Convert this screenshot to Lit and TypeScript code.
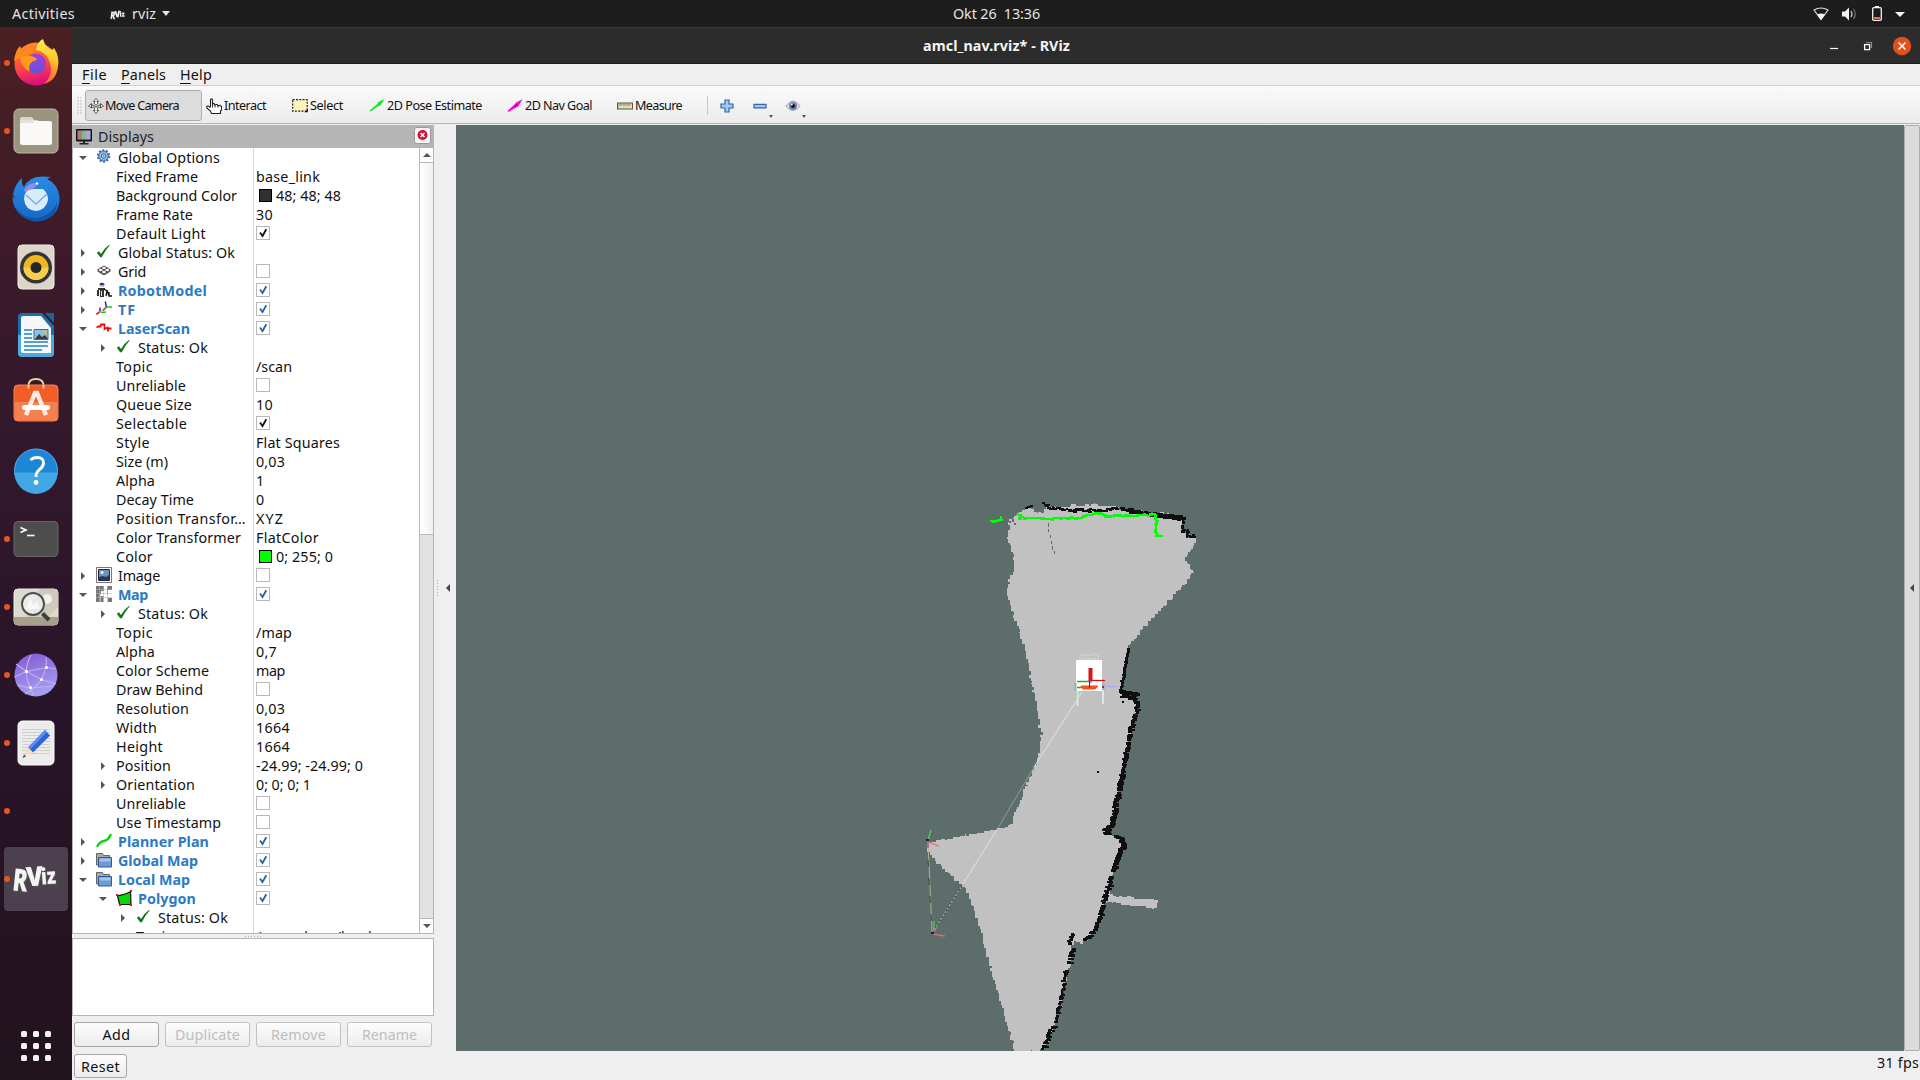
import { LitElement, html, svg, css, nothing } from "lit";
import { customElement } from "lit/decorators.js";

type Pt = [number, number];

/* Deterministic noise so that the occupancy grid always looks the same. */
function noise(seed: number) {
  let s = seed;
  return () => {
    s = (s * 1103515245 + 12345) & 0x7fffffff;
    return s / 0x7fffffff;
  };
}

const CELL = 1.5;
const snap = (v: number) => Math.round(v / CELL) * CELL;

/* Outline of the free space, stepped cell by cell. */
function ragged(points: Pt[], amp: number, seed: number): string {
  const rnd = noise(seed);
  let d = "";
  let lastY = 0;
  points.forEach((a, i) => {
    const b = points[(i + 1) % points.length];
    const len = Math.hypot(b[0] - a[0], b[1] - a[1]);
    const n = Math.max(1, Math.round(len / 2.4));
    for (let k = 0; k < n; k++) {
      const t = k / n;
      const x = snap(a[0] + (b[0] - a[0]) * t + (rnd() - 0.5) * amp);
      const y = Math.min(1051, snap(a[1] + (b[1] - a[1]) * t + (rnd() - 0.5) * amp));
      d += d ? `L${x} ${lastY}L${x} ${y}` : `M${x} ${y}`;
      lastY = y;
    }
  });
  return d + "Z";
}

/* A line of occupied cells. */
function cells(points: Pt[], width: number, jitter: number, seed: number, cell = 2): string {
  const rnd = noise(seed);
  let d = "";
  for (let i = 0; i < points.length - 1; i++) {
    const [ax, ay] = points[i];
    const [bx, by] = points[i + 1];
    const len = Math.hypot(bx - ax, by - ay);
    const n = Math.max(1, Math.round(len / 1.2));
    for (let k = 0; k <= n; k++) {
      const t = k / n;
      const x = Math.round(ax + (bx - ax) * t + (rnd() - 0.5) * jitter);
      const y = Math.round(ay + (by - ay) * t + (rnd() - 0.5) * jitter);
      const w = Math.max(cell, Math.round(width + (rnd() - 0.5) * jitter));
      d += `M${x - w / 2} ${y - 1}h${w}v${cell}h${-w}z`;
    }
  }
  return d;
}

const FREE: Pt[] = [
  [1010, 520], [1015, 514], [1025, 508], [1032, 507], [1034, 512], [1043, 512], [1045, 506], [1060, 507],
  [1077, 505], [1093, 504], [1110, 506], [1120, 509], [1160, 513], [1182, 518], [1183, 532], [1196, 537],
  [1195, 545], [1185, 560], [1193, 574], [1173, 597], [1153, 618], [1128, 647], [1125, 670], [1120, 693],
  [1135, 697], [1136, 707], [1132, 727], [1122, 773], [1113, 820], [1107, 833], [1117, 837], [1122, 843],
  [1113, 872], [1109, 896], [1100, 917], [1090, 938], [1082, 943], [1075, 941], [1072, 948], [1071, 963],
  [1063, 990], [1056, 1020], [1047, 1045], [1040, 1051], [1015, 1051], [1007, 1023], [993, 977], [980, 927],
  [967, 890], [962, 885], [940, 865], [927, 850], [928, 842], [960, 836], [983, 832], [1009, 825],
  [1020, 800], [1028, 780], [1037, 760], [1041, 733], [1036, 700], [1030, 673], [1023, 640], [1013, 613],
  [1007, 593], [1010, 575], [1015, 567], [1013, 552], [1007, 537], [1008, 529],
];
const SPUR: Pt[] = [[1106, 894], [1120, 896], [1133, 898], [1158, 900], [1156, 908], [1133, 905], [1106, 901]];

const WALLS = [
  cells([[1026, 508], [1031, 506]], 3, 1.5, 3),
  cells([[1043, 504], [1048, 507], [1060, 509], [1070, 511], [1083, 510], [1100, 511], [1112, 509], [1125, 509]], 3, 3, 7),
  cells([[1128, 510], [1140, 513], [1155, 514], [1170, 516], [1182, 518]], 5, 3, 9, 3),
  cells([[1182, 518], [1183, 532], [1188, 531], [1187, 536], [1195, 536]], 2, 2.4, 11),
  cells([[1128, 649], [1125, 665], [1121, 690]], 3, 1.4, 13),
  cells([[1120, 691], [1127, 693], [1137, 695]], 5, 3.4, 15, 3),
  cells([[1122, 696], [1134, 698], [1138, 706], [1135, 716], [1130, 735], [1127, 750], [1122, 777]], 4, 2.4, 17, 2),
  cells([[1122, 777], [1118, 795], [1114, 818], [1112, 824]], 5, 3, 19, 2),
  cells([[1112, 824], [1107, 830], [1108, 835]], 6, 4, 21, 2),
  cells([[1116, 836], [1122, 839], [1123, 845], [1118, 858], [1113, 871]], 4.6, 2, 23, 3),
  cells([[1110, 876], [1111, 882], [1106, 893], [1105, 899]], 4.4, 3, 25, 2),
  cells([[1104, 900], [1101, 915], [1095, 930], [1090, 937], [1085, 940]], 4.4, 2.2, 27, 2),
  cells([[1072, 934], [1070, 944]], 4, 2.2, 29),
  cells([[1073, 948], [1070, 965]], 5, 3.4, 31, 2),
  cells([[1066, 970], [1063, 990], [1059, 1008], [1056, 1022]], 3, 2.4, 33, 2),
  cells([[1054, 1026], [1048, 1036], [1046, 1044], [1043, 1048]], 4, 3, 35, 2),
].join("");

const SCAN = [
  cells([[1019, 514], [1020, 518], [1035, 518], [1050, 519], [1065, 518], [1080, 518], [1084, 516], [1100, 513], [1106, 517], [1115, 515], [1130, 516], [1140, 515], [1155, 515]], 3, 1.4, 41),
  cells([[1155, 515], [1156, 522], [1155, 532], [1157, 535], [1162, 536]], 2.4, 1.4, 43),
  cells([[992, 522], [1001, 520]], 3, 1.5, 45),
  "M1000 516h2v5h-2z",
].join("");

const GAPS = [
  "M1048 523h1v4h-1zM1048 529h1v3h-1zM1050 535h1v3h-1zM1051 541h1v3h-1zM1052 546h1v4h-1zM1054 551h1v3h-1z",
  "M1010 516h2v2h-2zM1012 519h2v3h-2zM1009 521h2v2h-2zM1014 523h2v2h-2z",
].join("");

/* ---------- tree ---------- */
interface Row {
  depth: number;
  label: string;
  w: number;
  icon?: string;
  open?: boolean;
  arrow?: boolean;
  bold?: boolean;
  value?: string;
  vw?: number;
  check?: "off" | "on" | "blue";
  swatch?: string;
}
const leaf = (label: string, w: number, value: string, vw: number, extra: Partial<Row> = {}): Row => ({ depth: 1, label, w, value, vw, ...extra });
const flag = (label: string, w: number, check: "off" | "on"): Row => ({ depth: 1, label, w, check });
const node = (label: string, w: number, icon: string, extra: Partial<Row> = {}): Row => ({ depth: 0, label, w, icon, arrow: true, ...extra });

const ROWS: Row[] = [
  node("Global Options", 101, "gear", { open: true }),
  leaf("Fixed Frame", 81, "base_link", 63),
  leaf("Background Color", 120, "48; 48; 48", 64, { swatch: "#303030" }),
  leaf("Frame Rate", 76, "30", 16),
  flag("Default Light", 89, "on"),
  node("Global Status: Ok", 116, "ok"),
  node("Grid", 27, "grid", { check: "off" }),
  node("RobotModel", 88, "robot", { bold: true, check: "blue" }),
  node("TF", 17, "tf", { bold: true, check: "blue" }),
  node("LaserScan", 71, "laser", { bold: true, check: "blue", open: true }),
  node("Status: Ok", 69, "ok", { depth: 1 }),
  leaf("Topic", 36, "/scan", 35),
  flag("Unreliable", 69, "off"),
  leaf("Queue Size", 75, "10", 16),
  flag("Selectable", 70, "on"),
  leaf("Style", 33, "Flat Squares", 83),
  leaf("Size (m)", 51, "0,03", 28),
  leaf("Alpha", 38, "1", 7),
  leaf("Decay Time", 77, "0", 8),
  leaf("Position Transfor…", 129, "XYZ", 27),
  leaf("Color Transformer", 124, "FlatColor", 62),
  leaf("Color", 36, "0; 255; 0", 56, { swatch: "#00ff00" }),
  node("Image", 41, "image", { check: "off" }),
  node("Map", 29, "map", { bold: true, check: "blue", open: true }),
  node("Status: Ok", 69, "ok", { depth: 1 }),
  leaf("Topic", 36, "/map", 35),
  leaf("Alpha", 38, "0,7", 20),
  leaf("Color Scheme", 92, "map", 28),
  flag("Draw Behind", 86, "off"),
  leaf("Resolution", 72, "0,03", 28),
  leaf("Width", 40, "1664", 33),
  leaf("Height", 46, "1664", 33),
  leaf("Position", 54, "-24.99; -24.99; 0", 106, { arrow: true }),
  leaf("Orientation", 78, "0; 0; 0; 1", 54, { arrow: true }),
  flag("Unreliable", 69, "off"),
  flag("Use Timestamp", 104, "off"),
  node("Planner Plan", 90, "path", { bold: true, check: "blue" }),
  node("Global Map", 79, "folder", { bold: true, check: "blue" }),
  node("Local Map", 71, "folder", { bold: true, check: "blue", open: true }),
  node("Polygon", 57, "polygon", { bold: true, check: "blue", open: true, depth: 1 }),
  node("Status: Ok", 69, "ok", { depth: 2 }),
  { depth: 2, label: "Topic", w: 36, value: "/move_base/local_c…", vw: 139 },
];

const ICONS: Record<string, unknown> = {
  gear: svg`<circle cx="7.500" cy="7" r="5.600" fill="none" stroke="#3d6da8" stroke-width="2.200" stroke-dasharray="2 1.500"/><circle cx="7.500" cy="7" r="4.900" fill="#8fb4e2" stroke="#3f70ad" stroke-width="1"/><circle cx="7.500" cy="7" r="2.200" fill="#c7dcf5" stroke="#3f70ad"/><circle cx="7.500" cy="7" r=".8" fill="#3f70ad"/>`,
  ok: svg`<path d="M.8 8.700L3 7.300L5 10Q8.500 4 13 1L13.800 1.200Q9 6.500 5.800 13.300L4.200 13.300Z" fill="#15751a"/>`,
  grid: svg`<path d="M1.500 7L8 3L14.500 7L8 11ZM4.700 5L11.300 9M11.300 5L4.700 9M1.500 8L8 12L14.500 8" fill="none" stroke="#444" stroke-width="1"/>`,
  robot: svg`<path d="M3.500 2Q6 -.5 8.500 2V3H3.500Z" fill="#25346f"/><path d="M4 3h4v2h-4z" fill="#bbb"/><path d="M2 6h7v2H2zM1 8h2v6H1zM4 8h4v7H4z" fill="#333"/><path d="M5 9h1v5H5z" fill="#ddd"/><path d="M8 7l3 2-1 5M11 8l2 6h3M13 10v4" fill="none" stroke="#111" stroke-width="1.300"/>`,
  tf: svg`<path d="M9.300 .5l1 5.500M4 6.500v4" stroke="#1414d8" stroke-width="1.400"/><path d="M10.500 6h5.500M5 11.500l5-.5" stroke="#10c818" stroke-width="1.400"/><path d="M10.500 6L7 9.500M4 10.500L.5 13.500" stroke="#e01010" stroke-width="1.600"/><path d="M4 11l6-5" stroke="#c8a820" stroke-width=".8"/>`,
  laser: svg`<path d="M.5 7.500L2.500 6.500H4.500L5 4.500H8.500V9L11.500 7.500L12 11.500V8.500H15.500" fill="none" stroke="#f80808" stroke-width="1.800"/>`,
  image: svg`<path d="M.5 .5h15v15H.5z" fill="#fff" stroke="#777"/><path d="M2.500 2.500h11v11h-11z" fill="#6c8fc4" stroke="#222840"/><circle cx="6" cy="5.500" r="1.600" fill="#fbf3b8"/><path d="M3 10l4-1 3 1 3-2v5H3z" fill="#2c3a58"/>`,
  map: svg`<path d="M0 0h16v16H0z" fill="#fff"/><path d="M0 0h8v5H5v3.500H4V16H0zM12 0h4v4h-4zM4.500 10h3v6h-3zM12 12h4v4h-4z" fill="#777"/><path d="M8 0h4v8H8z" fill="#fff"/><path d="M11 0h5v4h-4v4h-1z" fill="#777"/><path d="M0 3.500h16M0 7.500h16M0 11.500h16M3.500 0v16M7.500 0v16M11.500 0v16" stroke="#b5b5b5" stroke-width=".6"/>`,
  path: svg`<path d="M1.500 13Q4 8.500 8 8Q12 7.500 14.500 2" fill="none" stroke="#04d808" stroke-width="2.500" stroke-linecap="round"/>`,
  folder: svg`<path d="M.5 13V1.500h6l1 2h6V13z" fill="#a9a9a9" stroke="#666"/><path d="M2.500 5.500h13v9.500h-13z" fill="#6f9bd2" stroke="#2e5a95"/><path d="M3.500 6.500h11v3h-11z" fill="#a3c2e8"/>`,
  polygon: svg`<path d="M1.500 5.500Q9 5 14.500 1.500L15 14.500L3.500 14.500Z" fill="#06d808" stroke="#111" stroke-width="1.200"/><path d="M0 4h2v2H0zM14 0h2v2h-2zM3 14h2v2H3zM14 14h2v2h-2z" fill="#f01010"/>`,
  monitor: svg`<path d="M.5 .5h15v11.500H.5z" fill="#222" stroke="#111"/><path d="M1.500 1.500h4.500v9H1.500z" fill="#b57a80"/><path d="M6 1.500h4v9H6z" fill="#7dc07d"/><path d="M10 1.500h4.500v9H10z" fill="#a9a6de"/><path d="M7 12h2v2H7zM3.500 14h9v1.500h-9z" fill="#222"/>`,
  move: svg`<g fill="#fff" stroke="#333" stroke-width=".8"><path d="M8 .5L10.500 3.500H5.500ZM8 15.500L10.500 12.500H5.500ZM.5 8L3.500 5.500V10ZM15.500 8L12.500 5.500V10Z"/><path d="M3.500 6.500L8 8.500L12.500 6.500M6.500 3.500V6L8 7L9.500 6V3.500M6.500 12.500V10L8 8.500L9.500 10V12.500M3.500 9.500L6 9M12.500 9.500L10 9"/></g>`,
  hand: svg`<path d="M4.500 9V1.500Q5.500 .2 6.500 1.500V6L8 5.500L9 7L11 6.300L12 7.800L14 7.300L15.500 8.500V12L14.500 13V15.500H5.500L4.500 13L.8 10V8.500L2.500 8L4.500 9.500" fill="#fff" stroke="#222" stroke-width="1.100"/><path d="M6.500 6v3.500M9 7v2.500M12 8v1.500" stroke="#222" stroke-width=".9"/>`,
  select: svg`<path d="M.7 1.700h14.500v11.500H.7z" fill="#fff5bb" stroke="#222" stroke-width="1.200" stroke-dasharray="2 1.300"/><path d="M15.800 11v3.300h-3.500z" fill="#111"/>`,
  pose: svg`<path d="M.5 12.500L9 5.500L8.500 4.500L15.500 1L11 8L10 7.500L1.500 13.500Z" fill="#0ee820"/>`,
  goal: svg`<path d="M.5 13L8 6L8.500 5L15.500 1L11 9L10 9L1.500 14Z" fill="#f408d8"/><path d="M8 9l2-3" stroke="#801070"/>`,
  ruler: svg`<path d="M.6 5h15v6H.6z" fill="#e5dfae" stroke="#555" stroke-width="1.200"/><path d="M3 5.500v2.500M5 5.500v2M7 5.500v2.500M9 5.500v2M11 5.500v2.500M13 5.500v2" stroke="#666" stroke-width=".8"/>`,
  plus: svg`<path d="M6 2h4v4h4v4h-4v4H6v-4H2V6h4z" fill="#a6c8ee" stroke="#2f66a8" stroke-width="1.200"/>`,
  minus: svg`<path d="M2 6.300h12v3.500H2z" fill="#a6c8ee" stroke="#2f66a8" stroke-width="1.200"/>`,
  eye: svg`<path d="M.8 8Q8 -2 15.200 8Q8 17 .8 8Z" fill="#ddd" stroke="#aaa"/><circle cx="8" cy="8" r="4" fill="#6a7fb8"/><circle cx="8" cy="8" r="2" fill="#14141c"/><circle cx="6.800" cy="6.500" r=".9" fill="#fff"/>`,
};

const icon = (name: string, cls = "ico") => html`<svg class=${cls} viewBox="0 0 16 16">${ICONS[name]}</svg>`;
const fit = (text: string, w: number, cls = "") => html`<span class="fit ${cls}" data-w=${w}>${text}</span>`;

const logoLetters = svg`
    <text x="1" y="36" font-size="31" textLength="15" lengthAdjust="spacingAndGlyphs" transform="rotate(6 8 24)">R</text>
    <text x="14" y="31" font-size="27" textLength="17" lengthAdjust="spacingAndGlyphs" transform="rotate(-4 22 22)">V</text>
    <text x="29" y="29" font-size="22" textLength="15" lengthAdjust="spacingAndGlyphs" transform="rotate(-4 36 22)">iz</text>`;
const rvizLogo = svg`<g class="logo">${logoLetters}</g>`;

/* Launcher icons on a 48 x 48 canvas. */
const DOCK: { dot: boolean; active?: boolean; art: unknown }[] = [
  { dot: true, art: svg`
    <circle cx="24" cy="25" r="21.500" fill="url(#ffa)"/>
    <path d="M2 22Q3 12 8 7L11 13Q16 8 21 8L21 14L10 17Z" fill="#ff8a1c"/>
    <path d="M24 11Q25 3 31 0Q33 8 40 11L42 9Q48 18 46 28Q44 42 32 45Q42 36 38 24Q35 13 24 11Z" fill="url(#ffy)"/>
    <circle cx="24" cy="24.500" r="10" fill="url(#ffp)"/>
    <path d="M8 18Q16 15 22 18Q25 19 25 21Q20 22 18 25Q16 29 18 33Q9 28 8 18Z" fill="#ff9a1e"/>` },
  { dot: true, art: svg`
    <rect x="2" y="2" width="44" height="44" rx="5" fill="#9c947f" stroke="#c0b9a5"/>
    <path d="M8 12q0-2 2-2h9q2 0 3 3h4v6H8z" fill="#d9d5cc"/>
    <rect x="8" y="14" width="32" height="24" rx="2.500" fill="#faf9f8"/><path d="M8 13h14v4H8z" fill="#e6e2da"/><path d="M8 17q0-1 3-1h10l2-2h14q3 0 3 3v6H8z" fill="#faf9f8"/>` },
  { dot: false, art: svg`
    <path d="M1 19Q3 9 10 3Q9 9 12 12Q16 2 30 1.500L39 2L35 4Q46 9 47.500 22Q48 38 35 44Q22 50 10 41Q0 33 .5 21L3 24Z" fill="url(#tb)"/>
    <path d="M4 32Q12 46 30 42Q44 36 45 26Q46 40 33 45Q12 50 4 32Z" fill="#1056a8"/>
    <path d="M12 15Q16 8 23 8Q26 10 22 13L14 18Z" fill="#9a8be8"/>
    <path d="M12 24Q12 15 21 14H31Q36 18 36 25Q34 35 24 36Q13 35 12 24Z" fill="#d9ecfb"/><path d="M14 20L24 29L35 19" fill="none" stroke="#7fa9d4" stroke-width="1.300"/><circle cx="25" cy="8.500" r="1.300" fill="#fff"/>` },
  { dot: false, art: svg`
    <rect x="6" y="2" width="36" height="44" rx="4" fill="#dcd6c8" stroke="#f0ece2"/>
    <circle cx="24" cy="24.500" r="16" fill="#34343a"/><circle cx="24" cy="24.500" r="12.500" fill="#edb81d"/><path d="M11.500 24.500a12.500 12.500 0 0 0 25 0z" fill="#f6d04d"/><circle cx="24" cy="24.500" r="5.500" fill="#26262a"/>` },
  { dot: false, art: svg`
    <path d="M10 2H30L42 15V42q0 4-4 4H10q-4 0-4-4V6q0-4 4-4z" fill="#1d6fa5"/><path d="M6 24h36v18q0 4-4 4H10q-4 0-4-4z" fill="#4fa9dc"/>
    <path d="M11 5H29L39 17V42H11Q9 42 9 40V7Q9 5 11 5Z" fill="#f5f8fa"/><path d="M33 2h9v10z" fill="#1b6598"/>
    <path d="M12 19h8M12 23h8M12 27h8M12 31h24M12 35h24M12 39h18" stroke="#2183bd" stroke-width="1.700"/>
    <path d="M22 18.500h14v10H22z" fill="#8dbfe0" stroke="#1b79b4"/><path d="M23 28l4-5 3 3 3-2 3 4z" fill="#3a3a3a"/><circle cx="33.500" cy="21" r="1.600" fill="#f4c020"/>` },
  { dot: false, art: svg`<g transform="translate(0 -2)">
    <path d="M16.500 12V8Q17 2 24 2Q31 2 31.500 8V12" fill="none" stroke="#efd6a4" stroke-width="1.800"/>
    <rect x="2" y="8" width="44" height="36" rx="4" fill="#f05d27" stroke="#f58257"/><path d="M2.500 25h43v15q0 3.500-3.500 3.500H6q-3.500 0-3.500-3.500z" fill="#f4804d"/>
    <path d="M16.500 8v3.500M31.500 8v3.500" stroke="#efd6a4" stroke-width="1.800"/>
    <path d="M14 38L23 16h2L34 38" fill="none" stroke="#fbeae3" stroke-width="4.500"/><rect x="10" y="28" width="28" height="5" rx="2.500" fill="#fff"/></g>` },
  { dot: false, art: svg`<g transform="translate(0 -.5)">
    <circle cx="24" cy="24" r="21.500" fill="#1e86d6" stroke="#58aee8"/><path d="M2.500 26a21.500 21.500 0 0 0 43 0z" fill="#43a7e4"/>
    <path d="M18.500 13.500Q21 11 25 11Q32 11 31.500 17Q31 20.500 27 23.500Q24 26 24 30.500" fill="none" stroke="#fff" stroke-width="2.900"/><circle cx="24" cy="36" r="2.400" fill="#fff"/></g>` },
  { dot: true, art: svg`
    <rect x="2" y="6.500" width="44" height="35" rx="4" fill="#4d4d4d" stroke="#666"/><path d="M8.500 12.500L14 15L8.500 17.500" fill="none" stroke="#fff" stroke-width="1.600"/><path d="M15 20.500h7.500" stroke="#fff" stroke-width="1.600"/>` },
  { dot: true, art: svg`
    <rect x="2" y="6" width="44" height="36" rx="4" fill="#dcd9cf" stroke="#efede6"/><path d="M28 6h14q4 0 4 4v14L36 34H14z" fill="#cfcbbc"/><path d="M2 34h44v4q0 4-4 4H6q-4 0-4-4z" fill="#a79f8b"/>
    <circle cx="35" cy="16" r="5" fill="#f2f0ea"/><circle cx="21" cy="21" r="11" fill="#eef0ee" fill-opacity=".8" stroke="#4d4d4d" stroke-width="1.900"/><path d="M14 26l4-10 4 6 3-4 3 8z" fill="#fff" fill-opacity=".7"/><path d="M30.500 30.500L37 37" stroke="#3e3e3e" stroke-width="4"/>` },
  { dot: true, art: svg`
    <circle cx="24" cy="24" r="21.500" fill="url(#glb)"/>
    <g fill="none" stroke="#c3aef4" stroke-width="1.100"><path d="M19 4Q10 20 18.500 37L22 45M34 6.500Q36 14 29.500 28.500Q25 36 13 43M2.500 26L14.500 20.500L34.500 16.500L44 18M4 13L14.500 20.500L29.500 28.500L44 33M5 34L18.500 37L42 35"/></g>
    <g fill="#fff"><circle cx="14.500" cy="20.500" r="1.500"/><circle cx="34.500" cy="16.500" r="1.500"/><circle cx="29.500" cy="28.500" r="1.500"/><circle cx="18.500" cy="36.500" r="1.500"/></g>` },
  { dot: true, art: svg`
    <rect x="6" y="2" width="36" height="44" rx="4.500" fill="#ececec" stroke="#fafafa"/>
    <path d="M10 10.500h28M10 13.500h28M10 16.500h28M10 19.500h28M10 22.500h28M10 25.500h28M10 28.500h28M10 31.500h28M10 34.500h28" stroke="#cfcfcf" stroke-width="1"/>
    <path d="M33 11L38 16.500L21 33.500L16 28.500Z" fill="#2f62d8"/><path d="M33 11L35 13L18 30.500L16 28.500Z" fill="#5d8cf0"/><path d="M16 28.500L21 33.500L11 38.500Z" fill="#f6dcc0"/><path d="M12 35.500L14 37.500L10.500 39Z" fill="#444"/>` },
  { dot: true, art: nothing },
  { dot: true, active: true, art: rvizLogo },
];

const TOOLS = [
  { icon: "move", text: "Move Camera", w: 73, box: 117, on: true },
  { icon: "hand", text: "Interact", w: 41, box: 86 },
  { icon: "select", text: "Select", w: 32, box: 77 },
  { icon: "pose", text: "2D Pose Estimate", w: 94, box: 138 },
  { icon: "goal", text: "2D Nav Goal", w: 66, box: 110 },
  { icon: "ruler", text: "Measure", w: 46, box: 93 },
];

@customElement("app-root")
export class AppRoot extends LitElement {
  static styles = css`
    :host { display: block; width: 1920px; height: 1080px; overflow: hidden; font-family: "Noto Sans", "Open Sans", sans-serif; font-size: 14.300px; color: #111; }
    * { box-sizing: border-box; }
    svg { display: block; flex: none; }
    .fit { white-space: pre; flex: none; }
    .desk { display: grid; grid-template: 27px 1053px / 72px 1848px; height: 1080px; }
    .top { grid-column: 1 / 3; background: #1d1d1d; color: #e4e4e4; display: grid; grid-template-columns: 879px 200px 1fr; align-items: center; line-height: 26px; height: 27px; }
    .top-left, .top-right { display: flex; align-items: center; }
    .top-left { padding-left: 12px; }
    .top-left .app { margin-left: 35px; display: flex; align-items: center; }
    .app .fit { margin: 0 6px 0 6px; }
    .clock { margin-left: 74px; }
    .top-right { justify-content: flex-end; padding-right: 4px; }
    .logo { font-family: "Open Sans", sans-serif; font-weight: 800; fill: #f4f4f4; filter: drop-shadow(1.500px 1px 0 #555); }
    .mini-logo { margin-top: 2px; overflow: visible; }
    .caret { width: 0; height: 0; border: 4.500px solid transparent; border-top: 5px solid #e4e4e4; border-bottom: 0; }

    .dock { background: linear-gradient(#4a2022, #3c1a2a 22%, #30172c 45%, #281428 65%, #21131c); display: flex; flex-direction: column; padding-top: 2px; }
    .slot { height: 68px; width: 72px; display: grid; grid-template-columns: 12px 48px; align-items: center; padding: 2px 0; position: relative; }
    .slot .dot { width: 6px; height: 6px; border-radius: 3px; background: #e95420; margin-left: 4px; z-index: 1; }
    .slot.active::before { content: ""; position: absolute; left: 4px; top: 2px; width: 64px; height: 64px; border-radius: 4px; background: #4d404e; }
    .slot svg { z-index: 1; overflow: visible; }
    .grid9 { margin: auto auto 19px 21px; display: grid; grid-template-columns: repeat(3, 6px); gap: 6px; }
    .grid9 i { width: 6px; height: 6px; border-radius: 1.500px; background: #f2f2f2; }

    .win { display: grid; grid-template-rows: 37px 22px 39px 926px 29px; background: #efefef; }
    .title { background: #2c2c2c; border-top: 1px solid #3b3b3b; border-bottom: 1px solid #1e1e1e; color: #f4f4f4; font-weight: 700; display: grid; grid-template-columns: 851px 1fr auto; align-items: center; }
    .title .fit { grid-column: 2; line-height: 34px; justify-self: start; }
    .wbtns { display: flex; align-items: center; padding-right: 8px; }
    .menu { display: flex; gap: 14px; padding-left: 10px; line-height: 21px; border-bottom: 1px solid #cfcfcf; }
    .menu u { text-underline-offset: 3px; text-decoration-thickness: 1px; }
    .tools { display: flex; padding: 4px 0 3px 5px; background: linear-gradient(#fafafa, #ececec); border-bottom: 1px solid #b4b4b4; margin-bottom: 1px; font-size: 12.600px; }
    .grip { width: 5px; height: 17px; margin: 7px 3px 0 0; background: radial-gradient(circle at 1px 1px, #bbb 0.600px, transparent 0.800px) 0 0 / 3px 3px; }
    .tool { height: 31px; display: flex; align-items: center; gap: 2px; padding-left: 2px; border: 1px solid transparent; }
    .tool.on { background: #dcdcdc; border-color: #adadad; border-radius: 3px; padding-left: 2px; margin-right: 1px; gap: 1px; }
    .tool .fit { line-height: 30px; }
    .ico { width: 16px; height: 16px; }
    .tsep { width: 1px; height: 19px; background: #c8c8c8; margin: 6px 11px 0 0; }
    .mini { display: flex; align-items: center; height: 31px; width: 33px; }
    .mini.wide .drop { margin: 21px 0 0 1px; }
    .drop { width: 0; height: 0; border: 2.500px solid transparent; border-top: 3px solid #555; border-bottom: 0; }

    .body { display: grid; grid-template-columns: 362px 22px 1448px 16px; }
    .panel { display: grid; grid-template-rows: 23px 786px 4px 78px 35px; }
    .ptitle { background: #b5b5b5; display: flex; align-items: center; padding: 0 3px 0 4px; gap: 6px; line-height: 23px; color: #222; }
    .ptitle .pclose { margin-left: auto; margin-top: -3px; }
    .tree { background: #fff; border: 1px solid #b4b4b4; border-top: 0; display: grid; grid-template-columns: 346px 14px; height: 786px; overflow: hidden; }
    .rows { overflow: hidden; height: 785px; }
    .row { display: grid; grid-template-columns: 181px 165px; height: 19px; line-height: 19px; }
    .name { display: flex; align-items: center; border-right: 1px solid #d6d6d6; overflow: hidden; }
    .name .ico { margin: 0 6px 0 3px; width: 16px; height: 16px; position: relative; top: -1px; }
    .name .plain { margin-left: 3px; }
    .pad { width: 20px; flex: none; }
    .tw { width: 20px; flex: none; display: flex; justify-content: center; }
    .tw.down::after { content: ""; border: 4px solid transparent; border-top: 4.500px solid #555; border-bottom: 0; }
    .tw.right::after { content: ""; border: 4px solid transparent; border-left: 4.500px solid #555; border-right: 0; }
    .bold { font-weight: 700; color: #2a7ac6; }
    .val { display: flex; align-items: center; padding-left: 2px; overflow: hidden; }
    .cb { width: 14px; height: 14px; border: 1px solid #b9b9b9; background: #fff; margin-top: -1px; }
    .cb svg { width: 12px; height: 12px; }
    .sw { width: 13px; height: 13px; border: 1px solid #000; margin: -1px 4px 0 3px; }
    .sb { display: grid; grid-template-rows: 14px 373px 1fr 14px; border-left: 1px solid #b9b9b9; background: #e2e2e2; height: 785px; }
    .sb div { display: flex; align-items: center; justify-content: center; background: #fdfdfd; }
    .sb .thumb { border: solid #b9b9b9; border-width: 1px 0; background: linear-gradient(90deg, #fff, #f0f0f0); }
    .sb .track { background: #e2e2e2; border-bottom: 1px solid #b9b9b9; }
    .ar { border: 4px solid transparent; width: 0; height: 0; }
    .ar.up { border-bottom: 4.500px solid #555; border-top: 0; }
    .ar.dn { border-top: 4.500px solid #555; border-bottom: 0; }
    .split { display: flex; justify-content: center; align-items: center; }
    .split i { width: 17px; height: 1px; background: repeating-linear-gradient(90deg, #aaa 0 1px, transparent 1px 3px); }
    .desc { background: #fff; border: 1px solid #b4b4b4; }
    .btns { display: flex; gap: 6px; padding: 6px 2px 3px 2px; }
    .btn { height: 25px; width: 85px; border: 1px solid #a6a6a6; border-radius: 3px; background: linear-gradient(#fdfdfd, #ececec); display: flex; justify-content: center; line-height: 23px; }
    .btn.off { color: #bebebe; border-color: #c2c2c2; }
    .handle { display: flex; align-items: center; padding-left: 3px; gap: 8px; }
    .handle i { width: 1px; height: 17px; background: repeating-linear-gradient(#aaa 0 1px, transparent 1px 3px); }
    .la { border: 4px solid transparent; border-right: 4.500px solid #444; border-left: 0; }
    .side { background: #dcdcdc; border: 1px solid #aeaeae; border-radius: 2px; display: flex; align-items: center; justify-content: center; }
    .foot { display: flex; justify-content: space-between; padding: 3px 1px 0 2px; }
    .foot .btn { width: 53px; height: 24px; line-height: 23px; }
    .foot .fps { line-height: 18px; }
  `;

  firstUpdated() {
    this.renderRoot.querySelectorAll<HTMLElement>(".fit").forEach((el) => {
      const want = Number(el.dataset.w);
      const n = (el.textContent ?? "").length;
      const have = el.getBoundingClientRect().width;
      if (n > 1 && have > 0) el.style.letterSpacing = `${((want + 1 - have) / n).toFixed(3)}px`;
    });
  }

  private row(r: Row) {
    const pads = Array.from({ length: r.depth }, () => html`<span class="pad"></span>`);
    const tw = r.arrow ? (r.open ? "down" : "right") : "";
    return html`<div class="row">
      <div class="name">${pads}<span class="tw ${tw}"></span>
        ${r.icon ? icon(r.icon) : nothing}${fit(r.label, r.w, (r.bold ? "bold" : "") + (r.icon ? "" : " plain"))}</div>
      <div class="val">
        ${r.check ? html`<span class="cb">${r.check === "off" ? nothing : html`<svg viewBox="0 0 12 12"><path d="M3 5.500L5.500 9L9.300 2.300" fill="none" stroke=${r.check === "on" ? "#111" : "#2465a8"} stroke-width="1.800"/></svg>`}</span>` : nothing}
        ${r.swatch ? html`<span class="sw" style="background:${r.swatch}"></span>` : nothing}
        ${r.value ? fit(r.value, r.vw ?? 0) : nothing}
      </div>
    </div>`;
  }

  private scene() {
    return html`<svg width="1448" height="926" viewBox="456 125 1448 926">
      <rect x="456" y="125" width="1448" height="926" fill="#5d6d6b"/>
      <g shape-rendering="crispEdges">
        <path d=${ragged(FREE, 2, 5)} fill="#c1c1c1"/>
        <path d=${ragged(SPUR, 2, 8)} fill="#c1c1c1"/>
        <path d=${GAPS} fill="#5d6d6b"/>
        <path d=${WALLS} fill="#0f0f0f"/>
        <path d="M1122 701h2v2h-2zM1097 771h2v2h-2z" fill="#0f0f0f"/>
        <path d=${SCAN} fill="#00ff00"/>
      </g>
      <g fill="none" stroke-width="1">
        <path d="M1082 692L1034 767" stroke="#e6e4d6"/>
        <path d="M1034 767L998 828" stroke="#8d9c93"/>
        <path d="M998 828L963 884" stroke="#e6e4d6"/>
        <path d="M963 884L933 932" stroke="#3c4538"/><path d="M963 884L933 932" stroke="#d9d8b4" stroke-dasharray="2 2"/>
        <path d="M928 842L932 932" stroke="#b0b28e"/><path d="M928 860L932 932" stroke="#3c4538" stroke-dasharray="7 11"/>
        <path d="M928 840L931 830M934 931L934 921" stroke="#4fd44f" stroke-width="1.300"/>
        <path d="M928 842L939 846M933 934L945 936" stroke="#e06a6a" stroke-width="1.300"/>
        <path d="M928 841V848M935 931L937 927" stroke="#c060a8" stroke-width="1.500"/>
        <path d="M926 840h3M931 933h3" stroke="#1b1b44" stroke-width="2"/>
      </g>
      <rect x="1076" y="660" width="26" height="31" fill="#fff"/>
      <path d="M1080 656q4-3 8 0M1089 656q5-4 10 1M1079 659h20" fill="none" stroke="#d2d2d2" stroke-width="2" stroke-dasharray="2 1"/>
      <path d="M1075.500 683v8M1103.500 683v8" stroke="#a9a9a9" stroke-width="2"/>
      <path d="M1077.500 690v16M1103 690v14" stroke="#e4e4e4" stroke-width="2"/>
      <path d="M1076.500 692v8" stroke="#9be09b"/>
      <path d="M1081 686h17l-3 3h-12z" fill="#fb4d1c" stroke="#fb4d1c"/>
      <path d="M1077 681.500h13M1077 687.500h5" stroke="#18b818" stroke-width="1.300"/>
      <path d="M1090 680.500h15" stroke="#d81010" stroke-width="1.300"/>
      <rect x="1088.500" y="668" width="4" height="13" fill="#d81414"/>
      <path d="M1089.500 681v7" stroke="#8c1414" stroke-width="1"/>
      <path d="M1091 679v4" stroke="#5b35c9"/>
      <path d="M1105 686.500h12" stroke="#aaa4f4"/><circle cx="1103" cy="687" r="1" fill="#333"/>
    </svg>`;
  }

  render() {
    return html`<div class="desk">
      <div class="top">
        <div class="top-left">${fit("Activities", 62)}
          <div class="app"><svg class="mini-logo" width="16" height="15" viewBox="0 0 48 45">${rvizLogo}</svg>${fit("rviz", 23)}<i class="caret"></i></div>
        </div>
        <div class="clock">${fit("Okt 26  13:36", 86)}</div>
        <div class="top-right">
          <svg width="108" height="26" viewBox="1808 0 108 26">
            <path d="M1814 9Q1821 5 1828 9L1821 18.500Z" fill="none" stroke="#ddd" stroke-width="1.200"/><path d="M1817 13.500Q1821 11.500 1825 13.500L1821 19Z" fill="#f2f2f2"/>
            <path d="M1842 10.500h3l4-4v13l-4-4h-3z" fill="#f2f2f2"/><path d="M1851 10q2 3 0 6" fill="none" stroke="#ccc" stroke-width="1.200"/><path d="M1853.500 8q3.500 5 0 10" fill="none" stroke="#777" stroke-width="1.200"/>
            <rect x="1872.700" y="6.700" width="8.600" height="12.600" rx="1" fill="none" stroke="#f2f2f2" stroke-width="1.300"/><path d="M1875 5h4v1.500h-4z" fill="#f2f2f2"/><path d="M1874 16h6v2h-6z" fill="#f07030"/>
            <path d="M1895 11h10l-5 5z" fill="#f2f2f2"/>
          </svg>
        </div>
      </div>

      <div class="dock">
        ${DOCK.map((d) => html`<div class="slot ${d.active ? "active" : ""}">
          ${d.dot ? html`<span class="dot"></span>` : html`<span></span>`}
          <svg width="48" height="48" viewBox="0 0 48 48">
            <defs>
              <linearGradient id="ffa" x1="0" y1="0" x2=".2" y2="1"><stop offset="0" stop-color="#ff9a1e"/><stop offset=".55" stop-color="#ff4f3a"/><stop offset="1" stop-color="#e0107c"/></linearGradient>
              <linearGradient id="ffy" x1="0" y1="0" x2="0" y2="1"><stop offset="0" stop-color="#fff04a"/><stop offset=".5" stop-color="#ffc12a"/><stop offset="1" stop-color="#ff5a3c"/></linearGradient>
              <linearGradient id="ffp" x1="0.600" y1="0" x2="0.400" y2="1"><stop offset="0" stop-color="#a93be0"/><stop offset="1" stop-color="#5b57d8"/></linearGradient>
              <linearGradient id="tb" x1="0" y1="0" x2="0" y2="1"><stop offset="0" stop-color="#2a8be8"/><stop offset="1" stop-color="#1568c4"/></linearGradient>
              <linearGradient id="glb" x1="0" y1="0" x2="0.300" y2="1"><stop offset="0" stop-color="#8456d2"/><stop offset="1" stop-color="#a39ff0"/></linearGradient>
            </defs>${d.art}
          </svg>
        </div>`)}
        <div class="grid9">${Array.from({ length: 9 }, () => html`<i></i>`)}</div>
      </div>

      <div class="win">
        <div class="title">${fit("amcl_nav.rviz* - RViz", 146)}
          <div class="wbtns"><svg width="92" height="34" viewBox="1820 28 92 34">
            <path d="M1830 47.500h8" stroke="#fff" stroke-width="1.200"/>
            <path d="M1866 41.500h5.500v5.500" fill="none" stroke="#888" stroke-width="1.200"/><rect x="1864.600" y="43.600" width="5" height="5" fill="none" stroke="#fff" stroke-width="1.300"/>
            <circle cx="1902" cy="45" r="9.200" fill="#e2501b"/><path d="M1898.500 41.500l7 7M1905.500 41.500l-7 7" stroke="#fff" stroke-width="1.500"/>
          </svg></div>
        </div>
        <div class="menu">
          <span class="fit" data-w="24"><u>F</u>ile</span><span class="fit" data-w="44"><u>P</u>anels</span><span class="fit" data-w="31"><u>H</u>elp</span>
        </div>
        <div class="tools">
          <div class="grip"></div>
          ${TOOLS.map((t) => html`<div class="tool ${t.on ? "on" : ""}" style="width:${t.box}px">${icon(t.icon)}${fit(t.text, t.w)}</div>`)}
          <div class="tsep"></div>
          <div class="mini">${icon("plus")}</div>
          <div class="mini wide">${icon("minus")}<i class="drop"></i></div>
          <div class="mini wide">${icon("eye")}<i class="drop"></i></div>
        </div>
        <div class="body">
          <div class="panel">
            <div class="ptitle">${icon("monitor")}${fit("Displays", 55)}
              <svg class="pclose" width="17" height="17" viewBox="0 0 17 17"><rect x=".5" y=".5" width="16" height="16" rx="2" fill="#f6f6f6" stroke="#999"/><circle cx="8.500" cy="8" r="5" fill="#cf1230"/><path d="M6.500 6l4 4M10.500 6l-4 4" stroke="#fff" stroke-width="1.500"/></svg>
            </div>
            <div class="tree">
              <div class="rows">${ROWS.map((r) => this.row(r))}</div>
              <div class="sb"><div><i class="ar up"></i></div><div class="thumb"></div><div class="track"></div><div><i class="ar dn"></i></div></div>
            </div>
            <div class="split"><i></i></div>
            <div class="desc"></div>
            <div class="btns">
              <div class="btn">${fit("Add", 27)}</div><div class="btn off">${fit("Duplicate", 64)}</div><div class="btn off">${fit("Remove", 54)}</div><div class="btn off">${fit("Rename", 54)}</div>
            </div>
          </div>
          <div class="handle"><i></i><span class="la"></span></div>
          ${this.scene()}
          <div class="side"><span class="la"></span></div>
        </div>
        <div class="foot"><div class="btn">${fit("Reset", 38)}</div><div class="fps">${fit("31 fps", 41)}</div></div>
      </div>
    </div>`;
  }
}
